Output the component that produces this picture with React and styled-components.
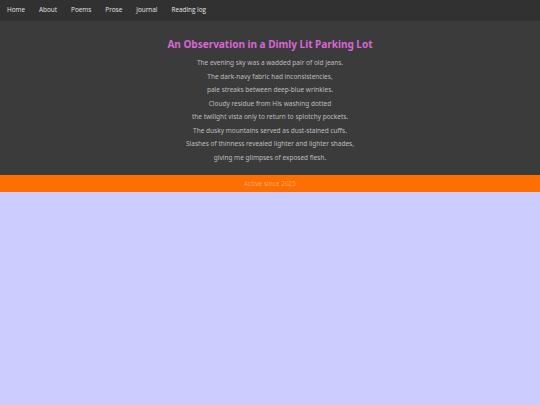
import React from "react";
import styled, { createGlobalStyle } from "styled-components";

const Global = createGlobalStyle`
  html, body { margin: 0; padding: 0; background: #ccccff; }
  body { font-family: "Open Sans", "Noto Sans", sans-serif; }
`;

const Nav = styled.nav`
  display: flex;
  align-items: center;
  gap: 14px;
  height: 21px;
  padding: 0 7px;
  background: #313131;
`;

const NavLink = styled.a`
  color: #e4e4e4;
  font-size: 6.4px;
  text-decoration: none;
  line-height: 1;
`;

const Main = styled.main`
  background: #3b3b3b;
  padding: 16px 0 11px;
  display: flex;
  flex-direction: column;
  align-items: center;
`;

const Title = styled.h1`
  margin: 0 0 5px;
  font-family: "Noto Sans", sans-serif;
  font-weight: 700;
  font-size: 10px;
  color: #d966d6;
`;

const Line = styled.p`
  margin: 0;
  font-family: "Noto Sans", sans-serif;
  font-size: 6.5px;
  line-height: 13.5px;
  color: #bdbdbd;
  text-align: center;
`;

const Footer = styled.footer`
  height: 17px;
  background: #ff6e00;
  display: flex;
  align-items: center;
  justify-content: center;
  font-family: "Noto Sans", sans-serif;
  font-size: 6.5px;
  color: #ffaa70;
`;

const links = ["Home", "About", "Poems", "Prose", "Journal", "Reading log"];
const poem = [
  "The evening sky was a wadded pair of old jeans.",
  "The dark-navy fabric had inconsistencies,",
  "pale streaks between deep-blue wrinkles.",
  "Cloudy residue from His washing dotted",
  "the twilight vista only to return to splotchy pockets.",
  "The dusky mountains served as dust-stained cuffs.",
  "Slashes of thinness revealed lighter and lighter shades,",
  "giving me glimpses of exposed flesh.",
];

export default function App() {
  return (
    <>
      <Global />
      <Nav>
        {links.map((l) => (
          <NavLink key={l} href="#">{l}</NavLink>
        ))}
      </Nav>
      <Main>
        <Title>An Observation in a Dimly Lit Parking Lot</Title>
        {poem.map((l) => (
          <Line key={l}>{l}</Line>
        ))}
      </Main>
      <Footer>Active since 2025</Footer>
    </>
  );
}
